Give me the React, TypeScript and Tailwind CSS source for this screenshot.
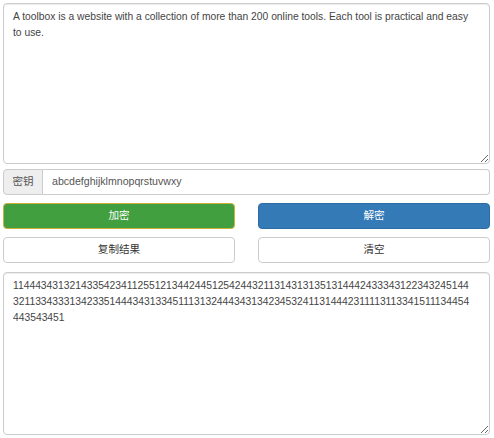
import React from 'react'

const SOURCE =
  'A toolbox is a website with a collection of more than 200 online tools. Each tool is practical and easy to use.'

const RESULT =
  '11444343132143354234112551213442445125424432113143131351314442433343122343245144' +
  '321133433313423351444343133451113132444343134234532411314442311113113341511134454' +
  '443543451'

const font = "font-['Liberation_Sans','Noto_Sans_CJK_SC',sans-serif]"

export default function App() {
  return (
    <div className={`w-[494px] h-[438px] bg-white px-[3px] pt-[3px] text-[10.6px] text-[#333] ${font}`}>
      <div className="w-[487px] flex flex-col">
        <textarea
          defaultValue={SOURCE}
          className="block h-[161px] w-full resize-y rounded-[4px] border border-[#ccc] pl-[9px] pr-[13px] py-[5px] text-[10.3px] leading-[16px] text-[#444] outline-none shadow-[inset_0_1px_1px_rgba(0,0,0,0.075)]"
        />

        <div className="mt-[5px] flex h-[26px] w-full">
          <span className="flex w-[40px] items-center justify-center rounded-l-[4px] border border-[#ccc] bg-[#eee] text-[#555]">
            密钥
          </span>
          <input
            defaultValue="abcdefghijklmnopqrstuvwxy"
            className="flex-1 rounded-r-[4px] border border-l-0 border-[#ccc] px-[9px] text-[#555] outline-none"
          />
        </div>

        <div className="mt-[8px] grid grid-cols-2 gap-x-[23px] gap-y-[8px]">
          <button className="h-[26px] rounded-[4px] border border-[#c9b23a] bg-[#419f3f] text-white">
            加密
          </button>
          <button className="h-[26px] rounded-[4px] border border-[#2e6da4] bg-[#337ab7] text-white">
            解密
          </button>
          <button className="h-[26px] rounded-[4px] border border-[#ccc] bg-white text-[#333]">
            复制结果
          </button>
          <button className="h-[26px] rounded-[4px] border border-[#ccc] bg-white text-[#333]">
            清空
          </button>
        </div>

        <textarea
          defaultValue={RESULT}
          className="mt-[9px] block h-[163px] w-full resize-y rounded-[4px] border border-[#ccc] pl-[9px] pr-[17px] py-[5px] text-[10.3px] leading-[16px] text-[#444] outline-none shadow-[inset_0_1px_1px_rgba(0,0,0,0.075)]"
        />
      </div>
    </div>
  )
}
